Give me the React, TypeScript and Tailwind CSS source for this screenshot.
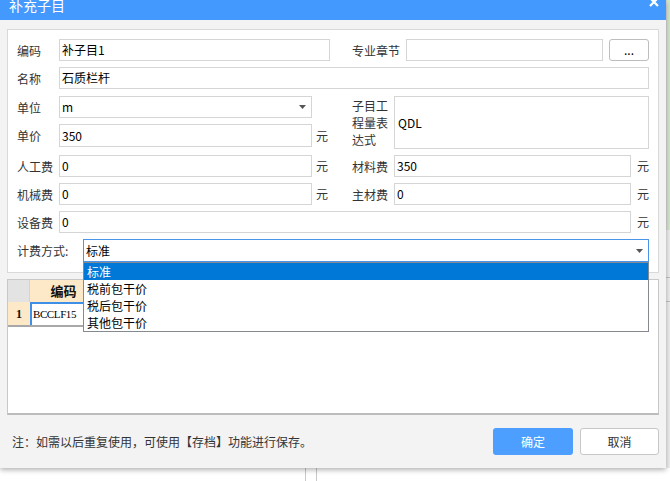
import React from "react";

function Box({ w, h = "h-[22px]", children }: { w: string; h?: string; children?: React.ReactNode }) {
  return (
    <div className={`${w} ${h} shrink-0 border border-[#d5d5d5] bg-white flex items-center pl-[2px] text-[12px] text-black`}>
      {children}
    </div>
  );
}

function Label({ w, children }: { w: string; children: React.ReactNode }) {
  return <div className={`${w} shrink-0 text-[12px] text-[#333] leading-[17px]`}>{children}</div>;
}

function Arrow() {
  return (
    <svg width="7" height="4" viewBox="0 0 7 4" className="shrink-0">
      <path d="M0 0 L7 0 L3.5 4 Z" fill="#555" />
    </svg>
  );
}

const Yuan = ({ ml }: { ml: string }) => (
  <div className={`${ml} text-[12px] text-[#333] w-[14px] shrink-0`}>元</div>
);

export default function App() {
  return (
    <div className="w-[670px] h-[481px] bg-white overflow-hidden flex flex-col font-['Noto_Sans_CJK_SC',sans-serif]">
      <div className="flex h-[468px] shrink-0">
        <div className="w-[666px] h-[468px] shrink-0 bg-[#f3f3f3] flex flex-col shadow-[0_2px_5px_rgba(0,0,0,0.3)] relative z-10">
          {/* title bar */}
          <div className="h-[20px] shrink-0 bg-[#4499fe] flex items-start justify-between pl-[9px] pr-[7px] overflow-hidden">
            <span className="text-white text-[14px] leading-[11px]">补充子目</span>
            <svg width="10" height="10" viewBox="0 0 10 10" className="-mt-[3px]">
              <path d="M1 1 L9 9 M9 1 L1 9" stroke="white" strokeWidth="2.2" />
            </svg>
          </div>

          <div className="px-[7px] pt-[9px] flex flex-col">
            {/* form panel */}
            <div className="h-[244px] border border-[#d9d9d9] bg-white pt-[9px] pl-[9px] flex flex-col relative z-20">
              {/* row 1 */}
              <div className="flex items-center h-[22px]">
                <Label w="w-[42px]">编码</Label>
                <Box w="w-[271px]">补子目1</Box>
                <Label w="w-[54px] ml-[22px]">专业章节</Label>
                <Box w="w-[197px]" />
                <div className="ml-[6px] w-[40px] h-[22px] shrink-0 border border-[#bdbdbd] rounded-[3px] bg-white flex items-center justify-center text-[12px] text-black leading-none">
                  ...
                </div>
              </div>
              {/* row 2 */}
              <div className="flex items-center h-[22px] mt-[6px]">
                <Label w="w-[42px]">名称</Label>
                <Box w="w-[590px]">石质栏杆</Box>
              </div>
              {/* rows 3-4 */}
              <div className="flex h-[53px] mt-[7px]">
                <div className="w-[313px] shrink-0 flex flex-col">
                  <div className="flex items-center h-[22px]">
                    <Label w="w-[42px]">单位</Label>
                    <div className="w-[253px] h-[22px] shrink-0 border border-[#d5d5d5] bg-white flex items-center justify-between pl-[2px] pr-[5px] text-[12px] text-black">
                      <span>m</span>
                      <Arrow />
                    </div>
                  </div>
                  <div className="flex items-center h-[23px] mt-[6px]">
                    <Label w="w-[42px]">单价</Label>
                    <Box w="w-[253px]" h="h-[23px]">350</Box>
                    <Yuan ml="ml-[4px]" />
                  </div>
                </div>
                <div className="ml-[22px] w-[42px] shrink-0 flex items-center text-[12px] text-[#333] leading-[17px]">
                  <div>
                    子目工
                    <br />
                    程量表
                    <br />
                    达式
                  </div>
                </div>
                <div className="w-[255px] h-[53px] shrink-0 border border-[#d5d5d5] bg-white flex items-center pl-[3px] text-[12px] text-black">
                  QDL
                </div>
              </div>
              {/* row 5 */}
              <div className="flex items-center h-[22px] mt-[6px]">
                <Label w="w-[42px]">人工费</Label>
                <Box w="w-[253px]">0</Box>
                <Yuan ml="ml-[4px]" />
                <Label w="w-[42px] ml-[22px]">材料费</Label>
                <Box w="w-[237px]">350</Box>
                <Yuan ml="ml-[6px]" />
              </div>
              {/* row 6 */}
              <div className="flex items-center h-[22px] mt-[6px]">
                <Label w="w-[42px]">机械费</Label>
                <Box w="w-[253px]">0</Box>
                <Yuan ml="ml-[4px]" />
                <Label w="w-[42px] ml-[22px]">主材费</Label>
                <Box w="w-[237px]">0</Box>
                <Yuan ml="ml-[6px]" />
              </div>
              {/* row 7 */}
              <div className="flex items-center h-[22px] mt-[6px]">
                <Label w="w-[42px]">设备费</Label>
                <Box w="w-[572px]">0</Box>
                <Yuan ml="ml-[6px]" />
              </div>
              {/* row 8 */}
              <div className="flex items-center h-[23px] mt-[6px]">
                <Label w="w-[66px]">计费方式:</Label>
                <div className="relative w-[566px] h-[23px] shrink-0">
                  <div className="w-full h-full border border-[#4a95ea] bg-white flex items-center justify-between pl-[2px] pr-[5px] text-[12px] text-black">
                    <span>标准</span>
                    <Arrow />
                  </div>
                  <div className="absolute top-full left-0 w-[566px] border border-[#858a90] bg-white flex flex-col text-[12px] text-black">
                    <div className="h-[17px] bg-[#0078d7] text-white flex items-center pl-[3px]">标准</div>
                    <div className="h-[17px] flex items-center pl-[3px]">税前包干价</div>
                    <div className="h-[17px] flex items-center pl-[3px]">税后包干价</div>
                    <div className="h-[17px] flex items-center pl-[3px]">其他包干价</div>
                  </div>
                </div>
              </div>
            </div>

            {/* grid panel */}
            <div className="mt-[6px] h-[136px] border border-[#c8c8c8] border-b-2 border-b-[#bcbcbc] bg-white flex flex-col">
              <div className="flex h-[22px]">
                <div className="w-[22px] bg-[#e3e3e3] border-r border-[#d4d4d4]" />
                <div className="w-[67px] bg-[#fde8c8] flex items-center justify-center text-[13px] font-bold text-[#111]">
                  编码
                </div>
              </div>
              <div className="flex h-[25px] border-b-2 border-[#a8a8a8] w-[89px]">
                <div className="w-[22px] bg-[#fde8c8] flex items-center justify-center text-[12px] font-bold text-[#111] font-['Liberation_Serif',serif]">
                  1
                </div>
                <div className="w-[67px] border-t-2 border-l-2 border-[#3d8fe8] bg-white flex items-center pl-[1px] text-[11px] tracking-[-0.4px] text-black font-['Liberation_Serif',serif]">
                  BCCLF15
                </div>
              </div>
            </div>

            {/* footer */}
            <div className="h-[53px] flex items-center justify-between pl-[5px]">
              <div className="text-[12px] text-[#333]">注：如需以后重复使用，可使用【存档】功能进行保存。</div>
              <div className="flex gap-[7px]">
                <div className="w-[80px] h-[27px] rounded-[3px] bg-[#4c9ffe] text-white text-[12px] flex items-center justify-center">
                  确定
                </div>
                <div className="w-[79px] h-[27px] rounded-[3px] bg-white border border-[#c8c8c8] text-[#333] text-[12px] flex items-center justify-center">
                  取消
                </div>
              </div>
            </div>
          </div>
        </div>
        <div className="w-[4px] shrink-0 flex flex-col bg-[#ececec]">
          <div className="h-[230px] flex">
            <div className="w-[1px] bg-[#d8d8d8]" />
            <div className="w-[3px] bg-[#d3e6c9]" />
          </div>
          <div className="h-[48px] border-b border-[#c0c0c0]" />
          <div className="h-[24px] border-b border-[#c0c0c0]" />
        </div>
      </div>
      <div className="flex h-[13px] shrink-0">
        <div className="ml-[305px] w-px bg-[#c8c8c8]" />
        <div className="ml-[10px] w-px bg-[#c8c8c8]" />
      </div>
    </div>
  );
}
